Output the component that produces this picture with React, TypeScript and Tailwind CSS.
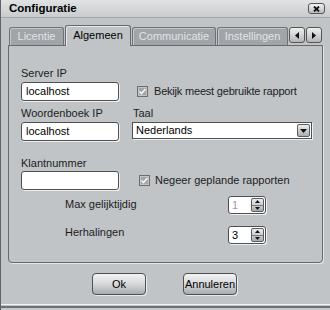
import React from "react";

function CloseBtn() {
  return (
    <div className="w-[17px] h-[11px] rounded-[3px] border border-[#555] bg-gradient-to-b from-[#f2f2f2] to-[#b9bcbf] flex items-center justify-center">
      <svg width="7" height="6" viewBox="0 0 7 6">
        <path d="M1 0.5 L6 5.5 M6 0.5 L1 5.5" stroke="#111" strokeWidth="1.8" />
      </svg>
    </div>
  );
}

function ArrowBtn({ dir }: { dir: "l" | "r" }) {
  return (
    <div className="w-[16px] h-[16px] rounded-[3px] border border-[#555] bg-gradient-to-b from-[#f0f0f0] to-[#b4b7ba] flex items-center justify-center">
      <svg width="4" height="7" viewBox="0 0 4 7">
        {dir === "l" ? <path d="M4 0 L0 3.5 L4 7 Z" fill="#111" /> : <path d="M0 0 L4 3.5 L0 7 Z" fill="#111" />}
      </svg>
    </div>
  );
}

function Tab({ label, w, active }: { label: string; w: string; active?: boolean }) {
  if (active) {
    return (
      <div
        className={`${w} h-[21px] -mb-[1px] relative z-10 rounded-t-[3px] border border-b-0 border-[#676a6d] bg-[#c0c4c7] shadow-[inset_1px_1px_0_#e6e8ea] flex items-center justify-center text-[11px] text-black pb-[2px]`}
      >
        {label}
      </div>
    );
  }
  return (
    <div
      className={`${w} h-[18px] rounded-t-[3px] border border-b-0 border-[#6f7275] bg-[#a1a5a9] shadow-[inset_1px_1px_0_#c4c7ca] flex items-center justify-center text-[11px] text-[#e2e3e4]`}
    >
      {label}
    </div>
  );
}

function TextInput({ value }: { value?: string }) {
  return (
    <div className="w-[98px] h-[19px] rounded-[3px] border border-[#4e5154] bg-white shadow-[1px_1px_0_#eef0f1] flex items-center pl-[4px] text-[11px] text-black">
      {value}
    </div>
  );
}

function CheckBox() {
  return (
    <svg width="11" height="11" viewBox="0 0 11 11">
      <rect x="0.5" y="0.5" width="10" height="10" fill="#a3a5a7" stroke="#6c6e70" />
      <rect x="1.5" y="1.5" width="8" height="8" fill="none" stroke="#c2c4c6" strokeWidth="1" />
      <path d="M2.5 5.5 L4.5 7.5 L8.5 3" stroke="#f4f4f4" strokeWidth="1.6" fill="none" />
    </svg>
  );
}

function Spinner({ value, disabled }: { value: string; disabled?: boolean }) {
  return (
    <div className="w-[38px] h-[18px] rounded-[3px] border border-[#4e5154] bg-white shadow-[1px_1px_0_#eef0f1] flex items-center justify-between pl-[3px] pr-[1px]">
      <span className={`text-[11px] ${disabled ? "text-[#a98fb9]" : "text-black"}`}>{value}</span>
      <div className="w-[13px] h-[14px] rounded-[2px] border border-[#5a5d60] bg-gradient-to-b from-[#eeeeee] to-[#a9acaf] flex flex-col">
        <div className="flex-1 flex items-center justify-center border-b border-[#7a7d80]">
          <svg width="5" height="3" viewBox="0 0 5 3">
            <path d="M0 3 L2.5 0 L5 3 Z" fill="#111" />
          </svg>
        </div>
        <div className="flex-1 flex items-center justify-center">
          <svg width="5" height="3" viewBox="0 0 5 3">
            <path d="M0 0 L2.5 3 L5 0 Z" fill="#111" />
          </svg>
        </div>
      </div>
    </div>
  );
}

function Button({ label }: { label: string }) {
  return (
    <div className="w-[54px] h-[22px] rounded-[4px] border border-[#4e5154] bg-gradient-to-b from-[#f3f3f3] via-[#d6d8da] to-[#a9acaf] shadow-[1px_1px_0_#e8eaec] flex items-center justify-center text-[11px] text-black">
      {label}
    </div>
  );
}

export default function App() {
  return (
    <div className="w-[330px] h-[310px] bg-[#c0c4c7] overflow-hidden font-['Liberation_Sans',Arial,sans-serif] text-[11px] leading-[13px] text-[#1c1c1c] border-l border-[#606366] flex flex-col">
      {/* Title bar */}
      <div className="h-[18px] shrink-0 flex items-center justify-between pl-[8px] pr-[5px] bg-gradient-to-b from-[#e0e2e4] to-[#c9ccce] border-b border-[#a4a8ab]">
        <span className="font-bold text-[11.5px] text-black">Configuratie</span>
        <CloseBtn />
      </div>

      {/* Tabs */}
      <div className="h-[27px] shrink-0 flex items-end gap-[1px] pl-[8px]">
        <Tab label="Licentie" w="w-[55px]" />
        <Tab label="Algemeen" w="w-[66px]" active />
        <Tab label="Communicatie" w="w-[84px]" />
        <Tab label="Instellingen" w="w-[71px]" />
        <div className="flex gap-[1px] mb-[2px]">
          <ArrowBtn dir="l" />
          <ArrowBtn dir="r" />
        </div>
      </div>

      {/* Panel */}
      <div className="ml-[7px] w-[315px] h-[218px] shrink-0 rounded-b-[4px] border border-[#676a6d] shadow-[1px_1px_0_#e4e6e8] pl-[12px] flex flex-col">
        <div className="mt-[21px]">Server IP</div>
        <div className="mt-[2px] flex items-center">
          <TextInput value="localhost" />
          <div className="ml-[18px] flex items-center gap-[6px]">
            <CheckBox />
            <span className="tracking-[-0.2px]">Bekijk meest gebruikte rapport</span>
          </div>
        </div>
        <div className="mt-[6px] flex">
          <div className="w-[112px]">Woordenboek IP</div>
          <div>Taal</div>
        </div>
        <div className="mt-[2px] flex items-start">
          <TextInput value="localhost" />
          <div className="ml-[13px] w-[180px] h-[17px] border border-[#4e5154] bg-white shadow-[1px_1px_0_#eef0f1] flex items-center justify-between pl-[3px] pr-[1px] text-black">
            <span>Nederlands</span>
            <div className="w-[13px] h-[13px] rounded-[2px] border border-[#5a5d60] bg-gradient-to-b from-[#eeeeee] to-[#a9acaf] flex items-center justify-center">
              <svg width="7" height="4" viewBox="0 0 7 4">
                <path d="M0 0 L3.5 4 L7 0 Z" fill="#111" />
              </svg>
            </div>
          </div>
        </div>
        <div className="mt-[16px]">Klantnummer</div>
        <div className="mt-[1px] flex items-center">
          <TextInput />
          <div className="ml-[20px] flex items-center gap-[5px]">
            <CheckBox />
            <span>Negeer geplande rapporten</span>
          </div>
        </div>
        <div className="mt-[6px] flex items-start">
          <div className="ml-[44px] w-[163px] pt-[2px]">Max gelijktijdig</div>
          <Spinner value="1" disabled />
        </div>
        <div className="mt-[12px] flex items-start">
          <div className="ml-[44px] w-[163px]">Herhalingen</div>
          <Spinner value="3" />
        </div>
      </div>

      {/* Buttons */}
      <div className="mt-[10px] flex pl-[91px] gap-[37px]">
        <Button label="Ok" />
        <Button label="Annuleren" />
      </div>

      {/* Bottom frame */}
      <div className="mt-[9px] border-t border-[#f2f3f4]" />
      <div className="mt-[1px] border-t-[2px] border-[#6e7174] flex-1 bg-[#c6c9cc]" />
    </div>
  );
}
